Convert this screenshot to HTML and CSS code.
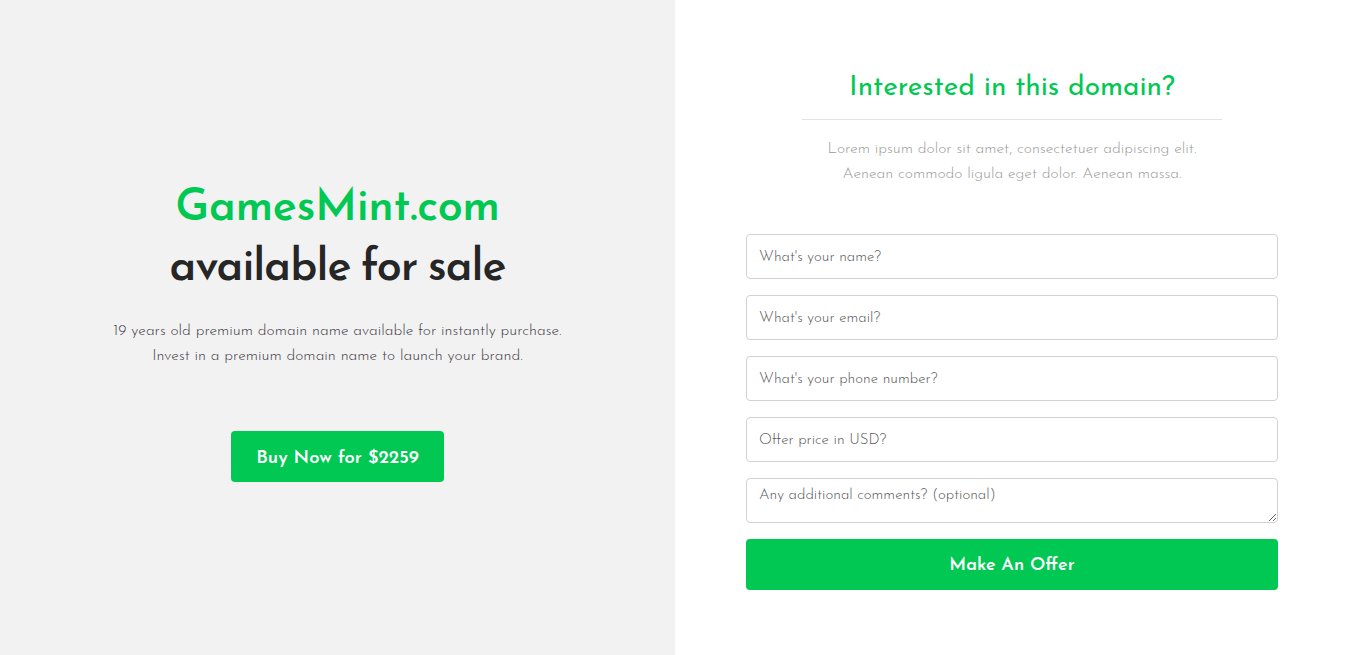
FILE: index.html
```html
<!DOCTYPE html>
<html lang="en">
<head>
    <meta charset="UTF-8">
    <meta name="viewport" content="width=device-width, initial-scale=1.0">
    <title>GamesMint.com is for sale</title>
    <link rel="stylesheet" href="styles.css">
</head>
<body>
    <div class="page">
        <!-- Domain pitch -->
        <section class="pitch">
            <h1><span class="domain">GamesMint.com</span><br><span class="tagline">available for sale</span></h1>
            <p>19 years old premium domain name available for instantly purchase.<br>Invest in a premium domain name to launch your brand.</p>
            <a class="buy-btn" href="#">Buy Now for $2259</a>
        </section>

        <!-- Offer form -->
        <section class="offer">
            <h2>Interested in this domain?</h2>
            <hr>
            <p class="lead">Lorem ipsum dolor sit amet, consectetuer adipiscing elit.<br>Aenean commodo ligula eget dolor. Aenean massa.</p>
            <form class="offer-form">
                <input type="text" placeholder="What's your name?">
                <input type="email" placeholder="What's your email?">
                <input type="text" placeholder="What's your phone number?">
                <input type="text" placeholder="Offer price in USD?">
                <textarea placeholder="Any additional comments? (optional)"></textarea>
                <button type="submit">Make An Offer</button>
            </form>
        </section>
    </div>
</body>
</html>
```

FILE: styles.css
```css
* {
    box-sizing: border-box;
}
html, body {
    margin: 0;
    padding: 0;
}
body {
    font-family: "Josefin Sans", Lato, "Open Sans", sans-serif;
    color: #333;
    background: #fff;
}
.page {
    display: flex;
    height: 100vh;
}
.pitch {
    width: 50.04%;
    background: #f2f2f2;
    display: flex;
    flex-direction: column;
    align-items: center;
    justify-content: center;
    text-align: center;
    padding-top: 6px;
}
.pitch h1 {
    margin: 0;
    font-size: 45px;
    line-height: 60px;
    font-weight: 600;
    letter-spacing: -0.4px;
    color: #262626;
}
.pitch .domain {
    color: #00c853;
}
.pitch .tagline {
    letter-spacing: -1px;
    word-spacing: -3px;
}
.pitch p {
    margin: 20px 0 0;
    font-size: 15.6px;
    line-height: 25px;
    font-weight: 300;
    color: #3f3a45;
}
.buy-btn {
    display: inline-block;
    margin-top: 62px;
    height: 51px;
    padding: 4px 25px 0;
    line-height: 47px;
    background: #00c853;
    color: #fff;
    font-size: 18.5px;
    font-weight: 600;
    text-decoration: none;
    border-radius: 4px;
}
.offer {
    flex: 1;
    display: flex;
    flex-direction: column;
    align-items: center;
    padding-top: 72px;
    text-align: center;
}
.offer h2 {
    margin: 0;
    font-size: 28px;
    line-height: 33px;
    font-weight: 400;
    color: #00c853;
}
.offer hr {
    width: 420px;
    margin: 14px 0 0;
    border: 0;
    border-top: 1px solid #e3e3e3;
}
.offer .lead {
    margin: 17px 0 0;
    font-size: 15.6px;
    line-height: 25px;
    font-weight: 300;
    color: #999;
}
.offer-form {
    width: 532px;
    margin-top: 47px;
    display: flex;
    flex-direction: column;
    gap: 16px;
}
.offer-form input,
.offer-form textarea {
    width: 100%;
    height: 45px;
    padding: 2px 12px 0;
    font-family: inherit;
    font-size: 15px;
    font-weight: 300;
    color: #555;
    border: 1px solid #d2d2d2;
    border-radius: 4px;
    background: #fff;
}
.offer-form textarea {
    padding-top: 9px;
    resize: vertical;
    display: block;
}
.offer-form ::placeholder {
    color: #555;
}
.offer-form button {
    height: 51px;
    padding-top: 4px;
    border: 0;
    border-radius: 4px;
    background: #00c853;
    color: #fff;
    font-family: inherit;
    font-size: 18px;
    font-weight: 600;
}
```
